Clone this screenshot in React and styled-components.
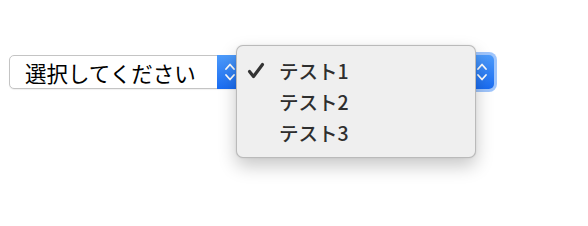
import React from "react";
import styled, { createGlobalStyle } from "styled-components";

const Global = createGlobalStyle`
  html, body { margin: 0; padding: 0; background: #fff; }
  body { font-family: "Noto Sans CJK JP", "Noto Sans", sans-serif; }
`;

const Page = styled.div`
  position: relative;
  width: 588px;
  height: 226px;
  padding: 55px 0 0 9px;
  box-sizing: border-box;
  display: flex;
  align-items: flex-start;
  gap: 16px;
`;

const Select = styled.div`
  position: relative;
  box-sizing: border-box;
  width: ${(p) => p.$w}px;
  height: 34px;
  display: flex;
  align-items: stretch;
  background: #fff;
  border: 1px solid #c4c4c4;
  border-radius: 5px;
  box-shadow: ${(p) =>
    p.$focus ? "0 0 0 3px rgba(80,150,250,0.55)" : "0 1px 1px rgba(0,0,0,0.06)"};
`;

const Label = styled.div`
  flex: 1;
  display: flex;
  align-items: center;
  padding-left: 15px;
  font-size: 21.5px;
  color: #000;
`;

const Stepper = styled.div`
  width: 25px;
  margin: -1px -1px -1px 0;
  border-radius: 0 5px 5px 0;
  background: linear-gradient(#4d9bfb, #1a6cf2);
  display: flex;
  align-items: center;
  justify-content: center;
`;

const Popup = styled.div`
  position: absolute;
  left: 236px;
  top: 45px;
  width: 240px;
  height: 113px;
  box-sizing: border-box;
  background: #efefef;
  border: 1px solid rgba(0, 0, 0, 0.22);
  border-radius: 7px;
  box-shadow: 0 8px 18px rgba(0, 0, 0, 0.22), 0 0 2px rgba(0, 0, 0, 0.1);
  padding: 9px 0;
  display: flex;
  flex-direction: column;
`;

const Option = styled.div`
  height: 31px;
  display: flex;
  align-items: center;
  font-size: 19.5px;
  font-weight: 500;
  color: #2e2e2e;
`;

const CheckCell = styled.div`
  width: 42px;
  display: flex;
  justify-content: flex-end;
  padding-right: 14px;
  box-sizing: border-box;
`;

const Chevrons = () => (
  <svg width="12" height="22" viewBox="0 0 12 22">
    <polyline points="2,8 6,3.5 10,8" fill="none" stroke="#fff" strokeWidth="1.8" strokeLinecap="round" strokeLinejoin="round" />
    <polyline points="2,14 6,18.5 10,14" fill="none" stroke="#fff" strokeWidth="1.8" strokeLinecap="round" strokeLinejoin="round" />
  </svg>
);

const Check = () => (
  <svg width="18" height="18" viewBox="0 0 18 18">
    <path d="M2.5 9.5 L6.5 14.5 L15.5 2.5" fill="none" stroke="#333" strokeWidth="3.2" strokeLinecap="round" strokeLinejoin="round" />
  </svg>
);

const options = ["テスト1", "テスト2", "テスト3"];

export default function App() {
  return (
    <>
      <Global />
      <Page>
        <Select $w={233}>
          <Label>選択してください</Label>
          <Stepper><Chevrons /></Stepper>
        </Select>
        <Select $w={236} $focus>
          <Label />
          <Stepper><Chevrons /></Stepper>
        </Select>
        <Popup>
          {options.map((o, i) => (
            <Option key={o}>
              <CheckCell>{i === 0 ? <Check /> : null}</CheckCell>
              {o}
            </Option>
          ))}
        </Popup>
      </Page>
    </>
  );
}
